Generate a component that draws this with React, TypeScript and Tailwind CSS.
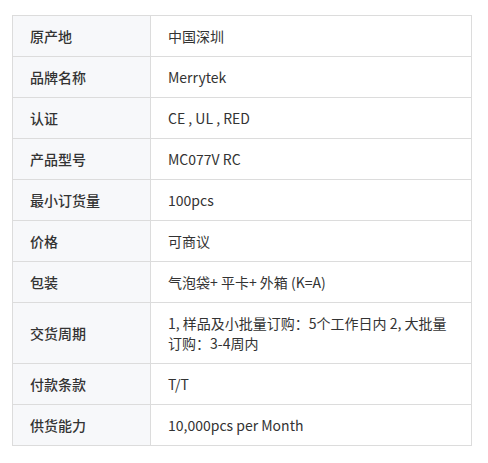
const rows: [string, string][] = [
  ["原产地", "中国深圳"],
  ["品牌名称", "Merrytek"],
  ["认证", "CE , UL , RED"],
  ["产品型号", "MC077V RC"],
  ["最小订货量", "100pcs"],
  ["价格", "可商议"],
  ["包装", "气泡袋+ 平卡+ 外箱 (K=A)"],
  ["交货周期", "1, 样品及小批量订购：5个工作日内 2, 大批量订购：3-4周内"],
  ["付款条款", "T/T"],
  ["供货能力", "10,000pcs per Month"],
];

export default function App() {
  return (
    <div className="min-h-[463px] w-[488px] bg-white pl-[12px] pt-[15px] font-['Noto_Sans_CJK_SC',sans-serif] text-[14px] text-[#333]">
      <table className="w-[460px] border-collapse border border-[#dcdcdc]">
        <tbody>
          {rows.map(([label, value]) => (
            <tr key={label} className="border-b border-[#dcdcdc]">
              <td className="h-[41px] w-[138px] border-r border-[#dcdcdc] bg-[#f7f8fa] pl-[17px] align-middle font-medium leading-5">
                {label}
              </td>
              <td className="h-[41px] px-[17px] py-[10px] align-middle leading-5">
                {value}
              </td>
            </tr>
          ))}
        </tbody>
      </table>
    </div>
  );
}
